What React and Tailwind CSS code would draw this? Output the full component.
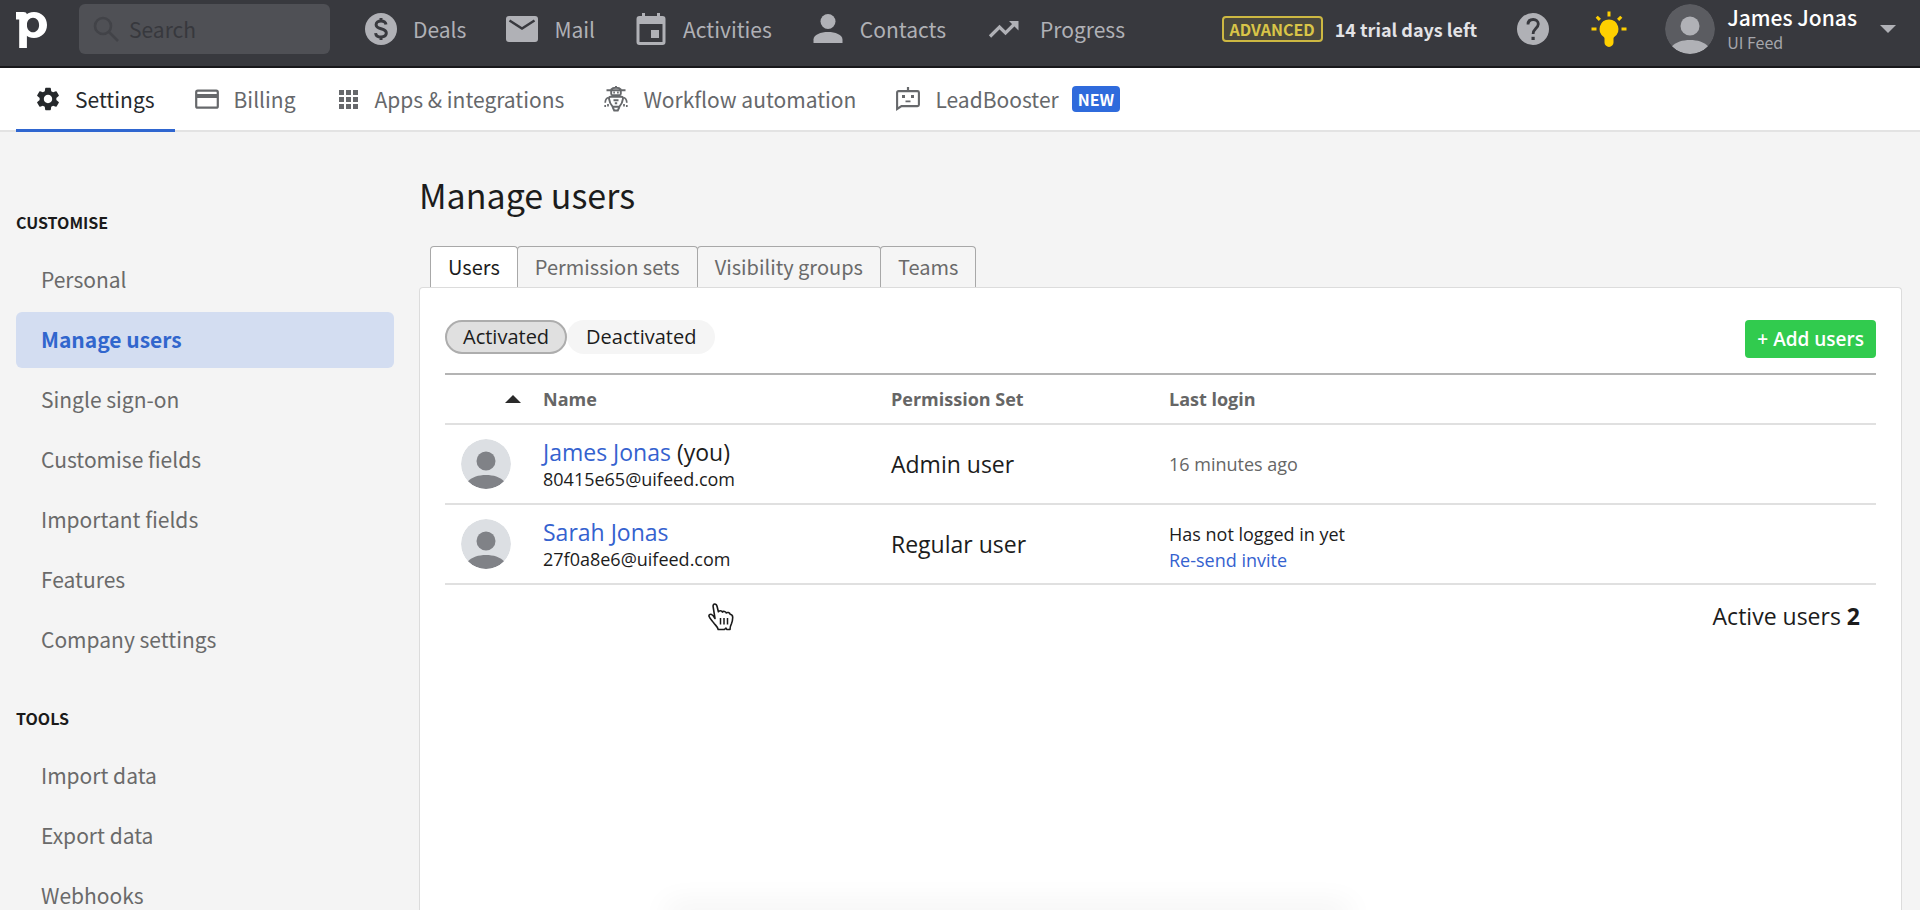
import { MdSettings } from 'react-icons/md';

const SANS = "font-['Noto_Sans_CJK_SC',sans-serif]";
const TABLE_SANS = "font-['Open_Sans',sans-serif]";

const USERS = [
  { id: 1, name: 'James Jonas', you: true, email: '80415e65@uifeed.com', role: 'Admin user', login: '16 minutes ago' },
  { id: 2, name: 'Sarah Jonas', you: false, email: '27f0a8e6@uifeed.com', role: 'Regular user', login: null },
];

const SIDEBAR = [
  {
    title: 'CUSTOMISE',
    items: ['Personal', 'Manage users', 'Single sign-on', 'Customise fields', 'Important fields', 'Features', 'Company settings'],
  },
  { title: 'TOOLS', items: ['Import data', 'Export data', 'Webhooks'] },
];

const TABS = ['Users', 'Permission sets', 'Visibility groups', 'Teams'];

/* ---------- Icons ---------- */

function Logo() {
  return (
    <svg className="w-8 h-[42px] shrink-0" viewBox="0 -3 32 42" fill="#fff">
      <path d="M0 1h7.500c2 0 3 .8 3.400 2.300V37H3.200V8.500H0z" />
      <path
        fillRule="evenodd"
        d="M18 1c7.500 0 13 5.500 13 13s-5.500 13-13 13S5 21.500 5 14 10.500 1 18 1zm-1 5.700c-3.400 0-6.100 3-6.100 7.300s2.700 7.300 6.100 7.300 6.100-3 6.100-7.300-2.700-7.300-6.100-7.300z"
      />
    </svg>
  );
}

function DealsIcon() {
  return (
    <svg className="w-8 h-8" viewBox="0 0 32 32" fill="none">
      <circle cx="16" cy="16" r="16" fill="currentColor" />
      <path d="M21 11.500c-.4-2.300-2.300-3.500-5-3.500-2.800 0-4.900 1.400-4.900 3.700 0 2.400 2 3.300 4.900 4.100 3 .8 5.300 1.700 5.300 4.300S19 24 16 24c-3 0-5.100-1.400-5.400-3.900M16 5v3.500M16 23.500V27" stroke="#38393e" strokeWidth="3" />
    </svg>
  );
}

function MailIcon() {
  return (
    <svg className="w-8 h-8" viewBox="0 0 32 32" fill="none">
      <rect y="3" width="32" height="26" rx="3" fill="currentColor" />
      <path d="M3.500 7.500 16 15.500l12.500-8" stroke="#38393e" strokeWidth="2.400" />
    </svg>
  );
}

function ActivitiesIcon() {
  return (
    <svg className="w-8 h-8" viewBox="0 0 32 32" fill="currentColor">
      <path fillRule="evenodd" d="M7 0h3v3h12V0h3v3h2.500A3 3 0 0 1 30.500 6v23a3 3 0 0 1-3 3h-23a3 3 0 0 1-3-3V6a3 3 0 0 1 3-3H7zM4.500 11v18h23V11z" />
      <rect x="16" y="17" width="8" height="8" />
    </svg>
  );
}

function ContactsIcon() {
  return (
    <svg className="w-8 h-8" viewBox="0 0 32 32" fill="currentColor">
      <circle cx="16" cy="8.500" r="7.500" />
      <path d="M1.500 30v-3.500C1.500 21.500 9 19 16 19s14.500 2.500 14.500 7.500V30z" />
    </svg>
  );
}

function ProgressIcon() {
  return (
    <svg className="w-[38px] h-8" viewBox="-2 0 38 32" fill="none">
      <path d="M2 23.500 11.500 14l6 6L27 10.500" stroke="currentColor" strokeWidth="3.200" />
      <path d="M21 8h9.500v9.500z" fill="currentColor" />
    </svg>
  );
}

function HelpIcon() {
  return (
    <svg className="w-8 h-8" viewBox="0 0 32 32" fill="none">
      <circle cx="16" cy="16" r="16" fill="#b0b1b6" />
      <path d="M11 11.500c0-3 2-5 5.200-5 3 0 5.100 1.800 5.100 4.600 0 4-5.200 4.600-5.200 9.900" stroke="#38393e" strokeWidth="2.800" />
      <rect x="14.500" y="23.800" width="3.200" height="3.200" fill="#38393e" />
    </svg>
  );
}

function BulbIcon() {
  return (
    <svg className="w-9 h-9" viewBox="0 0 36 36" fill="#ffd000">
      <path d="M18 8.500a9.500 9.500 0 0 1 5.200 17.400c-.5.400-.7.900-.7 1.500v4a4.500 4.500 0 0 1-9 0v-4c0-.6-.2-1.100-.7-1.500A9.500 9.500 0 0 1 18 8.500z" />
      <path d="M18 .5v5M.5 18h5M30.500 18h5M5.700 5.700l3.200 3.200M30.300 5.700l-3.200 3.200" stroke="#ffd000" strokeWidth="3" />
    </svg>
  );
}

function Avatar({ bg, fg }) {
  return (
    <svg className="w-[50px] h-[50px] shrink-0 rounded-full" viewBox="0 0 50 50">
      <circle cx="25" cy="25" r="25" fill={bg} />
      <circle cx="25" cy="22" r="9.500" fill={fg} />
      <path d="M7 42.300C11 38 17.500 36 25 36s14 2 18 6.300A25 25 0 0 1 25 50a25 25 0 0 1-18-7.700z" fill={fg} />
    </svg>
  );
}

function BillingIcon() {
  return (
    <svg className="w-6 h-6" viewBox="0 0 24 24" fill="none">
      <rect x="1.200" y="3.700" width="21.600" height="17" rx="1.500" stroke="currentColor" strokeWidth="2.200" />
      <rect x="1" y="7" width="22" height="4" fill="currentColor" />
    </svg>
  );
}

function AppsIcon() {
  return (
    <svg className="w-6 h-6" viewBox="0 0 24 24" fill="currentColor">
      {[3, 10, 17].map((x) => [3, 10, 17].map((y) => <rect key={`${x}-${y}`} x={x} y={y} width="5" height="5" />))}
    </svg>
  );
}

function WorkflowIcon() {
  return (
    <svg className="w-6 h-[26px]" viewBox="0 0 24 26" fill="none" stroke="currentColor" strokeWidth="1.900">
      <path d="M12 0v2M2.500 4.200h19M7 3.500c1-1.200 2.800-1.800 5-1.800s4 .6 5 1.800" />
      <path d="M7.200 4.500v3.300c0 1 .5 1.500 1.500 1.500h6.600c1 0 1.500-.5 1.500-1.500V4.500" />
      <path d="M9.300 5.600h1.600v1.800H9.300zM13.100 5.600h1.600v1.800h-1.600z" fill="currentColor" stroke="none" />
      <path d="M6.500 10.800h11c1.200 0 1.600.8 1.500 1.800-.4 3.300-1.800 6-3.600 8.100H8.600C6.800 18.600 5.400 15.900 5 12.600c-.1-1 .3-1.800 1.500-1.800z" />
      <path d="M9.500 14.200h5M10.800 17.200h2.400M8.600 21l1.600 3.500h3.600l1.600-3.500" />
      <path d="M4.500 11.500C2.500 12 1.300 13.800 1.200 16.800M19.500 11.500c2 .5 3.200 2.300 3.300 5.300M1.200 19v2M22.800 19v2M4 18v2.500M20 18v2.500" strokeWidth="1.700" />
    </svg>
  );
}

function LeadBoosterIcon() {
  return (
    <svg className="w-6 h-6" viewBox="0 0 24 24" fill="none">
      <path d="M1.100 22V5.500c0-.8.600-1.400 1.400-1.400h19c.8 0 1.400.6 1.400 1.400v12.200c0 .8-.6 1.400-1.400 1.400H5.500z" stroke="currentColor" strokeWidth="2.100" />
      <path d="M12 0v4" stroke="currentColor" strokeWidth="2.200" />
      <path d="M6 8h3v3H6zM15 8h3v3h-3zM9.500 13.500h5v1.800h-5z" fill="currentColor" />
    </svg>
  );
}

function HandCursor() {
  return (
    <svg className="absolute left-[263px] top-[18px] w-[26px] h-7" viewBox="0 0 26 28">
      <path
        d="M7 15.500 5.200 4.200C4.800 2 5.500 1 6.700 1s2 .8 2.400 2.500l1.300 5.300c.3-1.400 3.400-1.600 4 .3.800-1.200 3.300-.9 3.900.9 1-1 3.300-.6 3.900 1.300 1.500.2 2.600 1.200 2.500 3.400-.1 2.600-.3 4-1.300 6.100-.7 1.300-1.400 2.400-1.400 5.700h-3.300l-.7-1.500-1.600 1.500h-6.200c-.5-2.500-2.300-3.800-4-6C4.300 17.800 1.800 15.500 1 13.300c-.3-1.400 1-2.500 2.500-1.900 1.500.7 2.500 2.400 3.500 4.100z"
        fill="#fff"
        stroke="#1a1a1a"
        strokeWidth="1.600"
        strokeLinejoin="round"
      />
      <path d="M12.500 15v6.500M16 15v6.500M19.500 15v6.500" stroke="#1a1a1a" strokeWidth="1.500" />
    </svg>
  );
}

/* ---------- Layout ---------- */

const MAIN_NAV = [
  { label: 'Deals', Icon: DealsIcon },
  { label: 'Mail', Icon: MailIcon },
  { label: 'Activities', Icon: ActivitiesIcon },
  { label: 'Contacts', Icon: ContactsIcon },
  { label: 'Progress', Icon: ProgressIcon },
];

const SUB_NAV = [
  { label: 'Settings', Icon: () => <MdSettings className="w-7 h-7 -mx-0.5" />, active: true },
  { label: 'Billing', Icon: BillingIcon },
  { label: 'Apps & integrations', Icon: AppsIcon },
  { label: 'Workflow automation', Icon: WorkflowIcon },
  { label: 'LeadBooster', Icon: LeadBoosterIcon, badge: 'NEW' },
];

function TopBar() {
  return (
    <header className="flex items-center shrink-0 bg-[#38393e] border-b-2 border-[#18181b] pl-4 pr-6 pt-1 pb-3 text-[21px] leading-7">
      <a href="#" aria-label="Home">
        <Logo />
      </a>
      <div className="relative ml-[31px] w-[251px]">
        <svg className="absolute left-3.5 top-3 w-7 h-7" viewBox="0 0 28 28" fill="none" stroke="#424348" strokeWidth="2.600">
          <circle cx="10" cy="10" r="8" />
          <path d="m16 16 9 9" />
        </svg>
        <input
          type="text"
          aria-label="Search"
          placeholder="Search"
          className="w-full h-[50px] rounded-md bg-[#4f5055] pl-[50px] pr-3 text-white placeholder:text-[#37383d] outline-none"
        />
      </div>
      <nav className="flex items-center gap-10 ml-[35px]">
        {MAIN_NAV.map(({ label, Icon }) => (
          <a key={label} href="#" className="flex items-center gap-4 text-[#b0b1b6]">
            <Icon />
            {label}
          </a>
        ))}
      </nav>
      <div className="flex items-center ml-auto">
        <span className="h-[26px] px-1.5 rounded-sm border-2 border-[#cdb842] bg-[#4b493d] text-[#d9c548] text-base leading-[22px] font-bold">
          ADVANCED
        </span>
        <span className="ml-3 text-lg leading-7 font-bold text-[#e3e3e6]">14 trial days left</span>
        <button type="button" aria-label="Help" className="ml-10">
          <HelpIcon />
        </button>
        <button type="button" aria-label="Tips" className="ml-[42px]">
          <BulbIcon />
        </button>
        <button type="button" className="flex items-center ml-[38px] text-left">
          <Avatar bg="#5b5c61" fg="#b0b1b6" />
          <span className="flex flex-col ml-3">
            <span className="text-white font-medium leading-[26px]">James Jonas</span>
            <span className="text-[#a5a6ab] text-base leading-6">UI Feed</span>
          </span>
          <svg className="ml-[23px] w-4 h-2" viewBox="0 0 16 8">
            <path d="M0 0h16L8 8z" fill="#b0b1b6" />
          </svg>
        </button>
      </div>
    </header>
  );
}

function SubNav() {
  return (
    <nav className="flex items-stretch shrink-0 h-16 pl-4 bg-white border-b-2 border-[#e3e3e3] text-[21px] leading-7">
      {SUB_NAV.map(({ label, Icon, active, badge }) => (
        <a
          key={label}
          href="#"
          className={`flex items-center gap-[15px] px-5 -mb-0.5 border-b-[3px] ${
            active ? 'border-[#2f66d0] text-[#26292c]' : 'border-transparent text-[#66686b]'
          }`}
        >
          <Icon />
          {label}
          {badge && (
            <span className="-ml-0.5 px-1.5 rounded-sm bg-[#2f6bdc] text-white text-base leading-[26px] font-bold">{badge}</span>
          )}
        </a>
      ))}
    </nav>
  );
}

function Sidebar() {
  return (
    <aside className="w-[378px] shrink-0 pt-[78px]">
      {SIDEBAR.map((section) => (
        <section key={section.title} className="mb-[38px]">
          <h2 className="mb-[18px] text-base leading-6 font-bold text-[#1a1a1a]">{section.title}</h2>
          <ul className="flex flex-col gap-1">
            {section.items.map((item) => (
              <li key={item}>
                <a
                  href="#"
                  className={`flex items-center h-14 px-[25px] rounded-md text-[21px] ${
                    item === 'Manage users' ? 'bg-[#d3ddf1] text-[#3166cd] font-bold' : 'text-[#6a6a6a]'
                  }`}
                >
                  {item}
                </a>
              </li>
            ))}
          </ul>
        </section>
      ))}
    </aside>
  );
}

function UsersTable() {
  return (
    <table className="w-full mt-[15px] border-t-2 border-[#b4b4b4] text-left text-[#1c1c1c]">
      <thead>
        <tr className="h-[50px] border-b-2 border-[#e0e0e0] text-lg text-[#666]">
          <th className="w-[98px] pr-[22px]" aria-label="Sort ascending">
            <svg className="ml-auto w-4 h-2" viewBox="0 0 16 8">
              <path d="M0 8h16L8 0z" fill="#2a2a2a" />
            </svg>
          </th>
          <th className="w-[348px] font-bold">Name</th>
          <th className="w-[278px] font-bold">Permission Set</th>
          <th className="font-bold">Last login</th>
        </tr>
      </thead>
      <tbody>
        {USERS.map((user) => (
          <tr key={user.id} className="h-20 border-b-2 border-[#e0e0e0]">
            <td className="pl-4">
              <Avatar bg="#dcdfe3" fg="#808287" />
            </td>
            <td className="pt-0.5">
              <div className="text-[23px] leading-7">
                <a href="#" className="text-[#3562cf]">{user.name}</a>
                {user.you && ' (you)'}
              </div>
              <div className="text-lg leading-[26px]">{user.email}</div>
            </td>
            <td className="text-[23px]">{user.role}</td>
            <td className="text-lg leading-[26px]">
              {user.login ? (
                <span className="text-[#666]">{user.login}</span>
              ) : (
                <div className="pt-1.5">
                  <div>Has not logged in yet</div>
                  <a href="#" className="text-[#3562cf]">Re-send invite</a>
                </div>
              )}
            </td>
          </tr>
        ))}
      </tbody>
    </table>
  );
}

export default function App() {
  return (
    <div className={`relative flex flex-col h-screen overflow-hidden bg-[#f4f4f4] ${SANS}`}>
      <TopBar />
      <SubNav />
      <div className="flex flex-1 min-h-0 gap-[25px] pl-4 pr-[18px]">
        <Sidebar />
        <main className="flex flex-col flex-1 min-w-0">
          <h1 className="pt-[38px] text-[34px] leading-[50px] text-[#1c1c1c]">Manage users</h1>
          <div className="flex mt-[26px] ml-[11px]">
            {TABS.map((tab) => (
              <button
                key={tab}
                type="button"
                className={`h-[41px] px-[17px] -mr-px rounded-t border border-b-0 border-[#a8a8a8] text-xl ${
                  tab === 'Users' ? 'bg-white text-[#1c1c1c]' : 'bg-[#f5f5f5] text-[#6a6a6a]'
                }`}
              >
                {tab}
              </button>
            ))}
          </div>
          <div className={`flex-1 rounded-t px-[25px] pt-8 bg-white border border-b-0 border-[#dcdcdc] ${TABLE_SANS}`}>
            <div className="flex items-start justify-between text-xl text-[#1c1c1c]">
              <div className="flex">
                <button type="button" className="h-[34px] px-4 rounded-full border-2 border-[#adadad] bg-[#e0e0e0] leading-[30px]">
                  Activated
                </button>
                <button type="button" className="h-[34px] px-[19px] rounded-full bg-[#f5f5f5] leading-[34px]">
                  Deactivated
                </button>
              </div>
              <button type="button" className="h-[38px] px-3 rounded bg-[#31cb4e] text-white text-[19px] font-semibold">
                + Add users
              </button>
            </div>
            <UsersTable />
            <div className="relative pt-4 pr-4 text-right text-[23px] leading-[30px] text-[#1c1c1c]">
              Active users <b>2</b>
              <HandCursor />
            </div>
          </div>
        </main>
      </div>
      <div className="absolute -bottom-2 left-[35%] right-[30%] h-2 shadow-[0_0_30px_6px_rgba(0,0,0,0.06)]" />
    </div>
  );
}
